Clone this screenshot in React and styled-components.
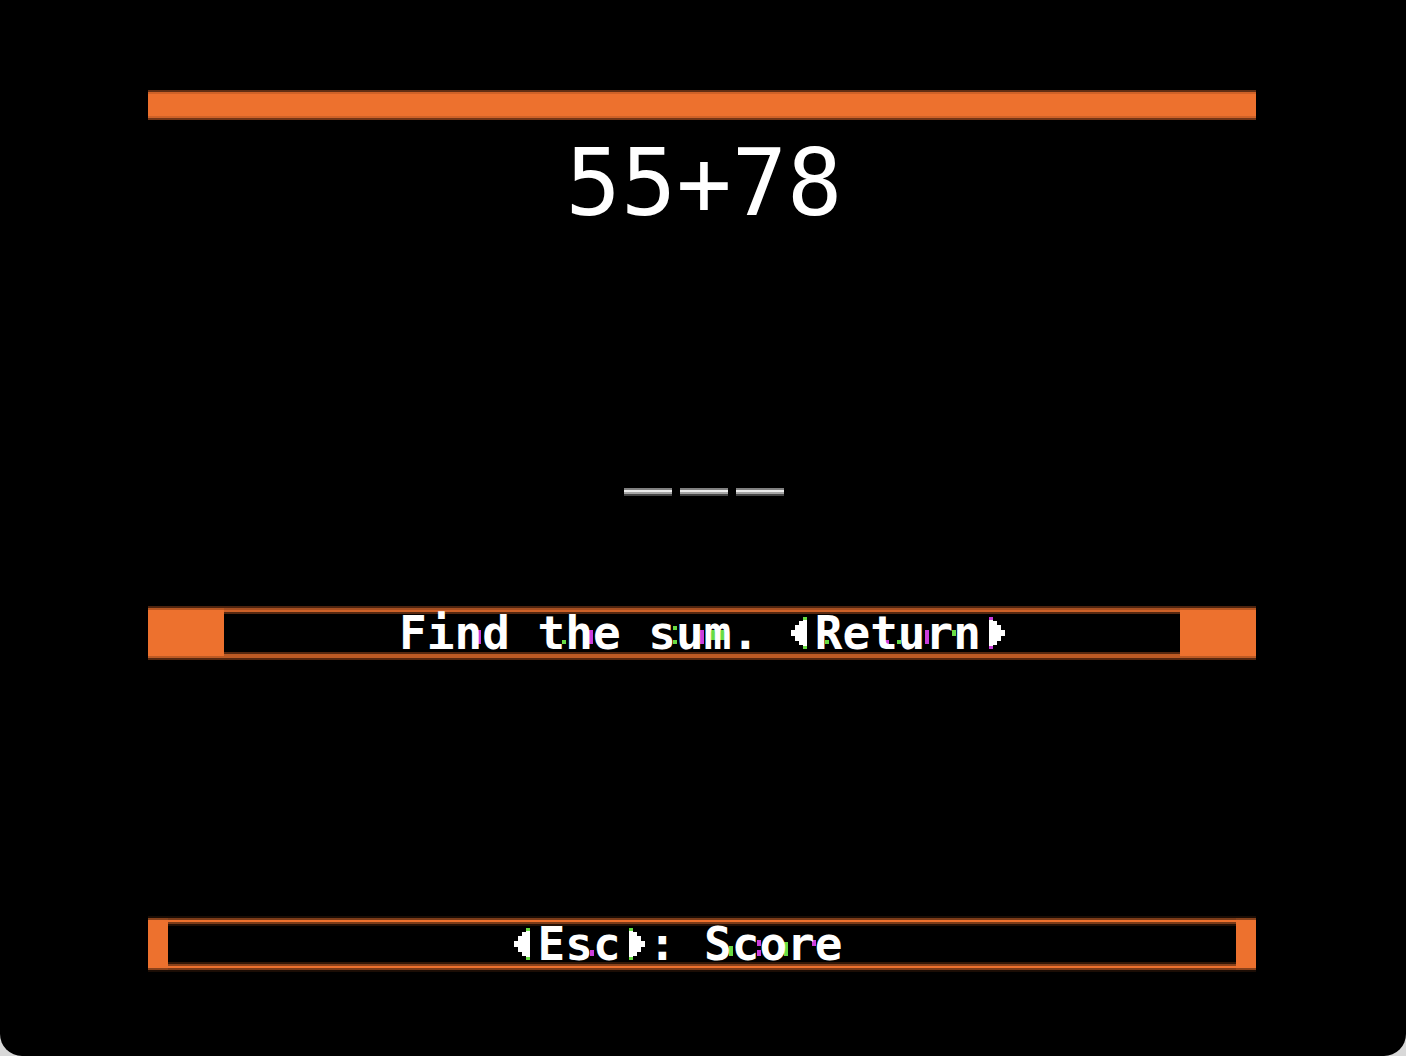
import React, { useState } from 'react';
import styled, { createGlobalStyle } from 'styled-components';

const ORANGE = '#ed712e';
const GREEN = '#68dc43';
const PURPLE = '#cb3ddb';

// Colour fringes between letters, as [x, y, width, height, colour]
const promptFringes = [
  [78, 24, 4, 14, PURPLE],
  [150, 34, 4, 4, PURPLE],
  [163, 34, 4, 4, GREEN],
  [190, 24, 4, 14, PURPLE],
  [274, 20, 4, 4, GREEN],
  [274, 34, 4, 4, GREEN],
  [301, 24, 4, 14, PURPLE],
  [312, 24, 14, 10, GREEN],
  [426, 34, 4, 4, GREEN],
  [486, 34, 4, 4, PURPLE],
  [498, 34, 4, 4, GREEN],
  [526, 24, 4, 14, PURPLE],
  [553, 24, 4, 6, GREEN],
];

const scoreFringes = [
  [80, 34, 4, 6, PURPLE],
  [219, 30, 4, 10, GREEN],
  [247, 24, 4, 6, PURPLE],
  [247, 34, 4, 6, PURPLE],
  [274, 26, 4, 14, GREEN],
  [302, 24, 4, 6, PURPLE],
];

const Fringes = ({ items }) => (
  <FringeLayer width="616" height="54" aria-hidden="true">
    {items.map(([x, y, w, h, fill]) => (
      <rect key={`${x}-${y}`} x={x} y={y} width={w} height={h} fill={fill} />
    ))}
  </FringeLayer>
);

const LeftArrow = ({ tint }) => (
  <Arrow viewBox="0 0 28 34" aria-hidden="true">
    <path d="M16 1h4v32h-4z" fill={tint} />
    <path d="M4 14h4V9h4V5h4V4h4v26h-4v-1h-4v-4H8v-5H4z" fill="#fff" />
  </Arrow>
);

const RightArrow = ({ tint }) => (
  <Arrow viewBox="0 0 28 34" aria-hidden="true">
    <path d="M8 1h4v32H8z" fill={tint} />
    <path d="M24 14h-4V9h-4V5h-4V4H8v26h4v-1h4v-4h4v-5h4z" fill="#fff" />
  </Arrow>
);

const App = () => {
  const [answer, setAnswer] = useState('');

  return (
    <>
      <GlobalStyle />
      <Screen>
        <TopBar />

        <Problem>
          <Equation>55+78</Equation>
          <Answer
            aria-label="Answer"
            maxLength={3}
            value={answer}
            onChange={(e) => setAnswer(e.target.value)}
          />
        </Problem>

        <PromptBar>
          <PromptText>
            <Line>
              <Fringes items={promptFringes} />
              <span>Find the sum. </span>
              <KeyButton type="button">
                <LeftArrow tint={GREEN} />
                Return
                <RightArrow tint={PURPLE} />
              </KeyButton>
            </Line>
          </PromptText>
        </PromptBar>

        <ScoreBar>
          <ScoreText>
            <Line>
              <Fringes items={scoreFringes} />
              <KeyButton type="button">
                <LeftArrow tint={GREEN} />
                Esc
                <RightArrow tint={GREEN} />
              </KeyButton>
              <span>: Score</span>
            </Line>
          </ScoreText>
        </ScoreBar>
      </Screen>
    </>
  );
};

// --- STYLES ---

const GlobalStyle = createGlobalStyle`
  * {
    box-sizing: border-box;
  }

  body {
    margin: 0;
    background: #d8d8d8;
  }
`;

const Screen = styled.main`
  display: flex;
  flex-direction: column;
  min-height: 100vh;
  padding: 90px 150px 84px 148px;
  background: #000;
  border-radius: 0 0 22px 22px;
  color: #fff;
  font-family: 'DejaVu Sans Mono', monospace;
`;

const TopBar = styled.div`
  height: 30px;
  background: linear-gradient(
    #642f13 2px,
    #cf6228 2px 4px,
    ${ORANGE} 4px 26px,
    #cf6228 26px 28px,
    #743617 28px
  );
`;

const Problem = styled.section`
  flex: 1;
  display: flex;
  flex-direction: column;
  align-items: center;
  padding: 14px 0 110px 4px;
`;

const Equation = styled.h1`
  margin: 0;
  font-size: 92px;
  font-weight: 400;
  line-height: 100px;
`;

// Three 48px slots with an 8px gap, drawn along the bottom edge
const Answer = styled.input`
  width: 160px;
  height: 80px;
  margin-top: auto;
  padding: 0;
  border: 0;
  outline: 0;
  color: #fff;
  font: inherit;
  font-size: 92px;
  background:
    linear-gradient(90deg, transparent 48px, #000 48px 56px, transparent 56px 104px, #000 104px 112px, transparent 112px),
    linear-gradient(#808080 2px, #ebebeb 2px 4px, #a5a5a5 4px 6px, #464646 6px) bottom / 100% 8px no-repeat;
`;

const PromptBar = styled.section`
  padding: 0 76px;
  background: linear-gradient(
    #4e240f 2px,
    #b85621 2px 4px,
    ${ORANGE} 4px 50px,
    #bd5a24 50px 52px,
    #562810 52px
  );
`;

const ScoreBar = styled.section`
  margin-top: 256px;
  padding: 0 20px;
  background: linear-gradient(
    #1b0d05 2px,
    #8a421b 2px 4px,
    ${ORANGE} 4px 52px,
    #8a421b 52px 54px,
    #1b0d05 54px
  );
`;

const BarText = styled.div`
  display: flex;
  justify-content: center;
  font-size: 46px;
  font-weight: 700;
`;

const PromptText = styled(BarText)`
  padding-left: 4px;
  line-height: 54px;
  background: linear-gradient(
    #4e240f 2px,
    #a64e20 2px 4px,
    #cc6128 4px 6px,
    #562810 6px 8px,
    #000 8px 46px,
    #562810 46px 48px,
    #bd5a24 48px 52px,
    #562810 52px
  );
`;

// The line sits two characters left of centre
const ScoreText = styled(BarText)`
  padding-right: 52px;
  line-height: 56px;
  background: linear-gradient(
    #1b0d05 2px,
    #7c3b18 2px 4px,
    ${ORANGE} 4px 6px,
    #7c3b18 6px 8px,
    #241107 8px 10px,
    #000 10px 46px,
    #321808 46px 48px,
    #8a421b 48px 50px,
    ${ORANGE} 50px 52px,
    #7c3b18 52px 54px,
    #1b0d05 54px
  );
`;

const Line = styled.div`
  position: relative;
  z-index: 0;
  display: flex;
  align-items: center;
  white-space: pre;
`;

const FringeLayer = styled.svg`
  position: absolute;
  top: 0;
  left: 0;
  z-index: -1;
`;

const KeyButton = styled.button`
  display: flex;
  align-items: center;
  padding: 0;
  border: 0;
  background: none;
  color: inherit;
  font: inherit;
  cursor: pointer;
`;

const Arrow = styled.svg`
  width: 28px;
  height: 34px;
`;

export default App;
